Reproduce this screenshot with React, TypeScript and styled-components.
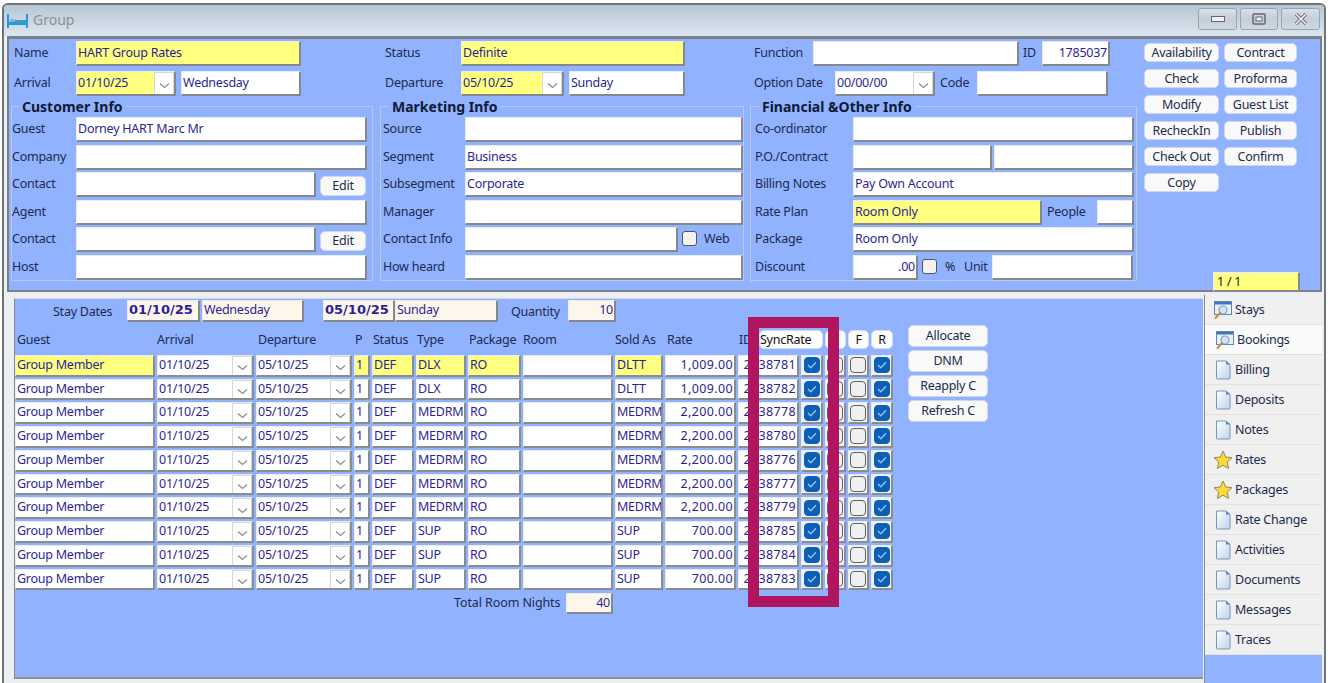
import React from "react";
import styled, { createGlobalStyle } from "styled-components";

const Global = createGlobalStyle`
  html, body { margin: 0; padding: 0; background: #fff; width: 1328px; height: 683px; overflow: hidden; }
  body { font-family: "Noto Sans", "Liberation Sans", sans-serif; font-size: 12.5px; letter-spacing: -0.25px; color: #1c2b4d; }
`;

const BLUE = "#91b2ff";
const INK = "#2a1f96";

const Win = styled.div`
  margin: 3px 2px 0 2px; height: 680px; box-sizing: border-box;
  border: 2px solid #6f7478; border-bottom: none; border-radius: 6px 6px 0 0;
  background: #eceff2; display: flex; flex-direction: column; overflow: hidden;
`;
const TitleBar = styled.div`
  height: 31px; flex: none; display: flex; align-items: center; padding: 0 4px 0 3px;
  background: linear-gradient(#b7c6d3, #dbe7f0);
`;
const TitleText = styled.span`
  margin-left: 5px; margin-top: -2px; font-size: 14px; letter-spacing: 0; color: #8c9094;
`;
const WinBtns = styled.div`
  margin-left: auto; display: flex; gap: 3px; margin-top: -3px;
`;
const WinBtn = styled.div<{ $w: number }>`
  width: ${p => p.$w}px; height: 22px; box-sizing: border-box;
  border: 1px solid #98a4af; border-radius: 3px;
  background: linear-gradient(#d8e0e8, #c3ced8 50%, #cfd9e2);
  display: flex; align-items: center; justify-content: center;
`;
const TopPanel = styled.div`
  margin: 0 2px 0 3px; height: 256px; flex: none; box-sizing: border-box;
  border: 2px solid #7c7f85; border-top-width: 3px; background: ${BLUE};
  display: grid; grid-template-columns: 370px 370px 394px 176px; padding-left: 0;
`;
const Col = styled.div`
  display: flex; flex-direction: column; padding-top: 2px;
`;
const TopRow = styled.div<{ $pl?: number }>`
  height: 30px; display: flex; align-items: flex-start; padding-left: ${p => p.$pl ?? 5}px;
`;
const Label = styled.span<{ $w?: number; $ml?: number }>`
  ${p => p.$w ? `width: ${p.$w}px;` : ""} flex: none; height: 24px; line-height: 23px; white-space: nowrap;
  margin-left: ${p => p.$ml ?? 0}px; color: #1c2b4d;
`;
const Field = styled.div<{ $w: number; $yellow?: boolean; $right?: boolean; $ml?: number; $h?: number; $bg?: string; $bold?: boolean }>`
  width: ${p => p.$w}px; height: ${p => p.$h ?? 25}px; box-sizing: border-box; flex: none;
  margin-left: ${p => p.$ml ?? 0}px;
  background: ${p => p.$bg ?? (p.$yellow ? "#ffff80" : "#fff")};
  border-top: 1px solid #e6ecfa; border-left: 1px solid #e6ecfa;
  border-right: 2px solid #85888c; border-bottom: 2px solid #85888c;
  color: ${INK}; padding: 0 1px; line-height: ${p => (p.$h ?? 25) - 4}px; white-space: nowrap; overflow: hidden;
  display: flex; justify-content: ${p => p.$right ? "flex-end" : "flex-start"};
  font-weight: ${p => p.$bold ? 700 : 400};
  ${p => p.$bold ? `font-family: "DejaVu Sans", sans-serif; font-size: 13px; letter-spacing: 0;` : ""}
`;
const DropBtn = styled.span`
  margin-left: auto; width: 20px; flex: none; height: 100%; box-sizing: border-box; background: #fff;
  border: 1px solid #d8d8d8; border-bottom: none; display: flex; align-items: center; justify-content: center; padding-top: 4px;
  position: relative; right: -1px;
`;
const Group = styled.fieldset<{ $pl: number; $ml: number; $w: number }>`
  margin: -2px 0 0 ${p => p.$ml}px; width: ${p => p.$w}px; border: 1px solid #b9c8e8; padding: 0 0 0 ${p => p.$pl}px;
  min-width: 0; height: 182px; box-sizing: border-box;
`;
const Legend = styled.legend<{ $ml: number }>`
  margin-left: ${p => p.$ml}px; padding: 0 3px; font-weight: 700; font-size: 14px; letter-spacing: 0; line-height: 15px; color: #101a33;
`;
const GroupBody = styled.div`
  padding-top: 3px; display: flex; flex-direction: column;
`;
const GroupRow = styled.div`
  height: 27.5px; display: flex; align-items: flex-start;
`;
const SmallBtn = styled.div<{ $w?: number; $ml?: number; $h?: number }>`
  width: ${p => p.$w ? `${p.$w}px` : "100%"}; height: ${p => p.$h ?? 19}px; box-sizing: border-box; flex: none; text-align: center;
  margin-left: ${p => p.$ml ?? 0}px;
  line-height: ${p => (p.$h ?? 19) - 2}px; background: #f9f9f9; border: 1px solid #cfd8ea; border-radius: 5px; color: #1c2b4d; white-space: nowrap;
`;
const EditBtn = styled(SmallBtn)`
  margin-top: 4px;
`;
const Box = styled.span<{ $ml?: number; $mr?: number }>`
  width: 15px; height: 15px; box-sizing: border-box; flex: none; margin: 4px ${p => p.$mr ?? 0}px 0 ${p => p.$ml ?? 0}px;
  background: #f3f3f3; border: 1px solid #555; border-radius: 3px;
`;
const ButtonsCol = styled.div`
  display: flex; flex-direction: column; justify-content: space-between; padding: 4px 0 0 1px;
`;
const BtnGrid = styled.div`
  display: grid; grid-template-columns: 75px 73px; column-gap: 5px; row-gap: 7px; margin-left: 0;
`;
const Pager = styled(Field)`
  margin-left: 69px; margin-bottom: -2px; color: #222; padding-left: 3px; line-height: 18px;
`;
const Bottom = styled.div`
  flex: 1; display: flex; padding: 6px 0 0 0; min-height: 0; align-items: stretch;
`;
const Main = styled.div`
  margin-left: 10px; width: 1189px; height: 381px; box-sizing: border-box; background: ${BLUE};
  border-top: 1px solid #d4d9e4; border-bottom: 2px solid #8d9095; border-left: 1px solid #888;
  position: relative; padding: 1px 0 0 0;
`;
const Stay = styled.div`
  height: 29px; display: flex; align-items: flex-start;
`;
const Content = styled.div`
  display: flex; align-items: flex-start;
`;
const Table = styled.div`
  display: grid; width: 880px; row-gap: 2px; column-gap: 2px;
  grid-template-columns: 140px 97px 96px 16px 42px 50px 53px 90px 48px 71px 61px 22px 21px 21px 22px;
  grid-template-rows: 23.75px; grid-auto-rows: 21.75px;
`;
const Head = styled.div<{ $pl?: number }>`
  line-height: 22px; white-space: nowrap; padding-left: ${p => p.$pl ?? 0}px; color: #1c2b4d; height: 22px;
`;
const HeadBtn = styled.div`
  height: 19px; margin-top: 1px; line-height: 17px; box-sizing: border-box; background: #fdfdfd; border: 1px solid #d3ddf3; border-radius: 5px; text-align: center; color: #111;
`;
const SyncHead = styled(HeadBtn)`
  width: 64px; margin-left: -42px; text-align: left; padding-left: 0;
`;
const Cell = styled.div<{ $yellow?: boolean; $right?: boolean }>`
  background: ${p => p.$yellow ? "#ffff80" : "#fff"}; color: ${INK}; box-sizing: border-box;
  border-right: 2px solid #8a8d90; border-bottom: 2px solid #8a8d90;
  border-top: 1px solid #e6ecfa; border-left: 1px solid #e6ecfa;
  padding: 0 1px; line-height: 18px; white-space: nowrap; overflow: hidden; display: flex;
  justify-content: ${p => p.$right ? "flex-end" : "flex-start"};
  ${p => p.$right ? "letter-spacing: 0.35px;" : ""}
`;
const CheckCell = styled.div`
  background: #f4f4f4; box-sizing: border-box; display: flex; align-items: center; justify-content: center;
  border-right: 2px solid #8a8d90; border-bottom: 2px solid #8a8d90; border-top: 1px solid #e6ecfa; border-left: 1px solid #e6ecfa;
`;
const Check = styled.span<{ $on?: boolean }>`
  width: 16px; height: 16px; box-sizing: border-box; border-radius: 4px; display: flex; align-items: center; justify-content: center;
  background: ${p => p.$on ? "#0b5fb6" : "#f0f0f0"};
  border: 1px solid ${p => p.$on ? "#0b5fb6" : "#5f5f5f"};
`;
const Totals = styled.div`
  display: flex; margin-top: 3px; padding-left: 439px;
`;
const TotalLabel = styled(Label)`
  line-height: 20px; letter-spacing: -0.1px;
`;
const Actions = styled.div`
  margin-left: 13px; margin-top: -4px; display: flex; flex-direction: column; gap: 3px;
`;
const Highlight = styled.div`
  position: absolute; left: 733px; top: 18px; width: 91px; height: 290px; box-sizing: border-box;
  border: 11px solid #b01560; pointer-events: none;
`;
const Tabs = styled.div`
  margin-left: 1px; width: 117px; display: flex; flex-direction: column; margin-top: -3px; background: ${BLUE}; border-left: 1px solid #888;
`;
const Tab = styled.div<{ $active?: boolean }>`
  height: 30px; flex: none; box-sizing: border-box; display: flex; align-items: center; gap: 2px;
  padding-left: ${p => p.$active ? 10 : 8}px; background: ${p => p.$active ? "#fafafa" : "#f0f0f0"};
  border-bottom: 1px solid #e2e2e2; color: #1c2b4d;
`;
const IconSlot = styled.span`
  width: 20px; height: 20px; flex: none; display: flex; align-items: center; justify-content: center;
`;

const Chevron = () => (
  <svg width="11" height="7" viewBox="0 0 11 7"><path d="M1 1.5 L5.5 5.5 L10 1.5" fill="none" stroke="#8a8a8a" strokeWidth="1.2" /></svg>
);
const Tick = () => (
  <svg width="10" height="8" viewBox="0 0 10 8"><path d="M1 4 L3.8 6.8 L9 1.2" fill="none" stroke="#9cc3ea" strokeWidth="1.3" /></svg>
);
const Bed = () => (
  <svg width="21" height="14" viewBox="0 0 21 14">
    <path d="M1 0 V14 M20 0 V14" stroke="#1f9be8" strokeWidth="2" />
    <rect x="2" y="8" width="17" height="3" fill="#1f9be8" />
    <rect x="3" y="5" width="5" height="3" fill="#7fb4d8" />
    <rect x="8" y="6" width="11" height="2" fill="#5f8fb2" />
  </svg>
);
const Find = () => (
  <svg width="20" height="20" viewBox="0 0 20 20">
    <rect x="1.5" y="1.5" width="17" height="13" fill="#e8f0fa" stroke="#5f88b5" />
    <rect x="2" y="2" width="16" height="2.5" fill="#3f78b8" />
    <circle cx="10" cy="10" r="4" fill="#cfe5f7" stroke="#8aa0b5" strokeWidth="1.2" />
    <path d="M7 13 L2.5 18" stroke="#c98a3a" strokeWidth="2" strokeLinecap="round" />
  </svg>
);
const Doc = () => (
  <svg width="16" height="20" viewBox="0 0 16 20">
    <defs><linearGradient id="d" x1="0" y1="0" x2="1" y2="1"><stop offset="0" stopColor="#fff" /><stop offset="1" stopColor="#bcd4f2" /></linearGradient></defs>
    <path d="M1.5 1 H11 L15 4.5 V18 Q15 19 14 19 H2.5 Q1.5 19 1.5 18 Z" fill="url(#d)" stroke="#7f93ad" />
    <path d="M11 1 L15 4.5 H11 Z" fill="#3f86d8" />
  </svg>
);
const Star = () => (
  <svg width="20" height="20" viewBox="0 0 20 20">
    <path d="M10 1 L12.7 7 L19 7.7 L14.3 12 L15.6 18.5 L10 15.2 L4.4 18.5 L5.7 12 L1 7.7 L7.3 7 Z" fill="#ffd83a" stroke="#8f8a5a" strokeWidth="1" />
  </svg>
);

const DateField = ({ w, value, yellow, ml }: { w: number; value: string; yellow?: boolean; ml?: number }) => (
  <Field $w={w} $yellow={yellow} $ml={ml}>{value}<DropBtn><Chevron /></DropBtn></Field>
);

const rows = [
  ["DLX", "DLTT", "1,009.00", "38781"], ["DLX", "DLTT", "1,009.00", "38782"],
  ["MEDRM", "MEDRM", "2,200.00", "38778"], ["MEDRM", "MEDRM", "2,200.00", "38780"],
  ["MEDRM", "MEDRM", "2,200.00", "38776"], ["MEDRM", "MEDRM", "2,200.00", "38777"],
  ["MEDRM", "MEDRM", "2,200.00", "38779"], ["SUP", "SUP", "700.00", "38785"],
  ["SUP", "SUP", "700.00", "38784"], ["SUP", "SUP", "700.00", "38783"],
];
const tabs: [string, React.ReactNode][] = [
  ["Stays", <Find />], ["Bookings", <Find />], ["Billing", <Doc />], ["Deposits", <Doc />], ["Notes", <Doc />],
  ["Rates", <Star />], ["Packages", <Star />], ["Rate Change", <Doc />], ["Activities", <Doc />],
  ["Documents", <Doc />], ["Messages", <Doc />], ["Traces", <Doc />],
];
const topButtons = ["Availability", "Contract", "Check", "Proforma", "Modify", "Guest List", "RecheckIn", "Publish", "Check Out", "Confirm", "Copy"];

export default function App() {
  return (
    <>
      <Global />
      <Win>
        <TitleBar>
          <Bed />
          <TitleText>Group</TitleText>
          <WinBtns>
            <WinBtn $w={39}><svg width="14" height="6"><rect x="0.5" y="0.5" width="13" height="5" fill="#eef1f4" stroke="#667" /></svg></WinBtn>
            <WinBtn $w={38}><svg width="14" height="12"><rect x="1" y="1" width="12" height="10" rx="1" fill="none" stroke="#667" strokeWidth="1.5" /><rect x="4" y="4" width="6" height="4" fill="#eef1f4" stroke="#667" /></svg></WinBtn>
            <WinBtn $w={39}><svg width="14" height="12"><path d="M2 1 L12 11 M12 1 L2 11" stroke="#667" strokeWidth="3.4" /><path d="M2 1 L12 11 M12 1 L2 11" stroke="#eef1f4" strokeWidth="1.6" /></svg></WinBtn>
          </WinBtns>
        </TitleBar>
        <TopPanel>
          <Col>
            <TopRow><Label $w={62}>Name</Label><Field $w={225} $yellow>HART Group Rates</Field></TopRow>
            <TopRow><Label $w={62}>Arrival</Label><DateField w={100} value="01/10/25" yellow /><Field $w={120} $ml={5}>Wednesday</Field></TopRow>
            <Group $pl={0} $ml={2} $w={362}>
              <Legend $ml={7}>Customer Info</Legend>
              <GroupBody>
                <GroupRow><Label $w={64}>Guest</Label><Field $w={291}>Dorney HART Marc Mr</Field></GroupRow>
                <GroupRow><Label $w={64}>Company</Label><Field $w={291} /></GroupRow>
                <GroupRow><Label $w={64}>Contact</Label><Field $w={240} /><EditBtn $w={46} $ml={4} $h={20}>Edit</EditBtn></GroupRow>
                <GroupRow><Label $w={64}>Agent</Label><Field $w={291} /></GroupRow>
                <GroupRow><Label $w={64}>Contact</Label><Field $w={240} /><EditBtn $w={46} $ml={4} $h={20}>Edit</EditBtn></GroupRow>
                <GroupRow><Label $w={64}>Host</Label><Field $w={291} /></GroupRow>
              </GroupBody>
            </Group>
          </Col>
          <Col>
            <TopRow $pl={6}><Label $w={76}>Status</Label><Field $w={224} $yellow>Definite</Field></TopRow>
            <TopRow $pl={6}><Label $w={76}>Departure</Label><DateField w={103} value="05/10/25" yellow /><Field $w={116} $ml={5}>Sunday</Field></TopRow>
            <Group $pl={2} $ml={1} $w={364}>
              <Legend $ml={6}>Marketing Info</Legend>
              <GroupBody>
                <GroupRow><Label $w={82}>Source</Label><Field $w={278} /></GroupRow>
                <GroupRow><Label $w={82}>Segment</Label><Field $w={278}>Business</Field></GroupRow>
                <GroupRow><Label $w={82}>Subsegment</Label><Field $w={278}>Corporate</Field></GroupRow>
                <GroupRow><Label $w={82}>Manager</Label><Field $w={278} /></GroupRow>
                <GroupRow><Label $w={82}>Contact Info</Label><Field $w={213} /><Box $ml={4} /><Label $ml={7}>Web</Label></GroupRow>
                <GroupRow><Label $w={82}>How heard</Label><Field $w={278} /></GroupRow>
              </GroupBody>
            </Group>
          </Col>
          <Col>
            <TopRow $pl={5}><Label $w={59}>Function</Label><Field $w={206} /><Label $w={19} $ml={4}>ID</Label><Field $w={68} $right>1785037</Field></TopRow>
            <TopRow $pl={5}><Label $w={81}>Option Date</Label><DateField w={100} value="00/00/00" /><Label $w={37} $ml={5}>Code</Label><Field $w={131} /></TopRow>
            <Group $pl={4} $ml={1} $w={387}>
              <Legend $ml={4}>Financial &amp;Other Info</Legend>
              <GroupBody>
                <GroupRow><Label $w={98}>Co-ordinator</Label><Field $w={281} /></GroupRow>
                <GroupRow><Label $w={98}>P.O./Contract</Label><Field $w={139} /><Field $w={140} $ml={2} /></GroupRow>
                <GroupRow><Label $w={98}>Billing Notes</Label><Field $w={281}>Pay Own Account</Field></GroupRow>
                <GroupRow><Label $w={98}>Rate Plan</Label><Field $w={189} $yellow>Room Only</Field><Label $w={50} $ml={5}>People</Label><Field $w={37} /></GroupRow>
                <GroupRow><Label $w={98}>Package</Label><Field $w={281}>Room Only</Field></GroupRow>
                <GroupRow><Label $w={98}>Discount</Label><Field $w={65} $right>.00</Field><Box $ml={4} /><Label $w={12} $ml={8}>%</Label><Label $ml={7} $w={28}>Unit</Label><Field $w={141} /></GroupRow>
              </GroupBody>
            </Group>
          </Col>
          <ButtonsCol>
            <BtnGrid>{topButtons.map(b => <SmallBtn key={b}>{b}</SmallBtn>)}</BtnGrid>
            <Pager $w={87} $h={20} $yellow>1 / 1</Pager>
          </ButtonsCol>
        </TopPanel>
        <Bottom>
          <Main>
            <Stay>
              <Label $w={74} $ml={38}>Stay Dates</Label>
              <Field $w={73} $h={22} $bold $bg="#fdf6ea">01/10/25</Field>
              <Field $w={102} $h={22} $ml={2} $bg="#fdf6ea">Wednesday</Field>
              <Field $w={72} $h={22} $ml={19} $bold $bg="#fdf6ea">05/10/25</Field>
              <Field $w={103} $h={22} $bg="#fdf6ea">Sunday</Field>
              <Label $w={57} $ml={13}>Quantity</Label>
              <Field $w={48} $h={22} $right $bg="#fdf6ea">10</Field>
            </Stay>
            <Content>
              <div>
                <Table>
                  <Head $pl={2}>Guest</Head><Head>Arrival</Head><Head $pl={2}>Departure</Head><Head $pl={1}>P</Head><Head $pl={1}>Status</Head>
                  <Head $pl={1}>Type</Head><Head $pl={1}>Package</Head><Head>Room</Head><Head>Sold As</Head><Head $pl={2}>Rate</Head><Head $pl={1}>ID</Head>
                  <SyncHead>SyncRate</SyncHead><HeadBtn /><HeadBtn>F</HeadBtn><HeadBtn>R</HeadBtn>
                  {rows.map(([type, sold, rate, id], i) => {
                    const y = i === 0;
                    return (
                      <React.Fragment key={id}>
                        <Cell $yellow={y}>Group Member</Cell>
                        <Cell>01/10/25<DropBtn><Chevron /></DropBtn></Cell>
                        <Cell>05/10/25<DropBtn><Chevron /></DropBtn></Cell>
                        <Cell $yellow={y}>1</Cell>
                        <Cell $yellow={y}>DEF</Cell>
                        <Cell $yellow={y}>{type}</Cell>
                        <Cell $yellow={y}>RO</Cell>
                        <Cell />
                        <Cell $yellow={y}>{sold}</Cell>
                        <Cell $right>{rate}</Cell>
                        <Cell $right>{"21" + id}</Cell>
                        <CheckCell><Check $on><Tick /></Check></CheckCell>
                        <CheckCell><Check /></CheckCell>
                        <CheckCell><Check /></CheckCell>
                        <CheckCell><Check $on><Tick /></Check></CheckCell>
                      </React.Fragment>
                    );
                  })}
                </Table>
                <Totals>
                  <TotalLabel $w={112}>Total Room Nights</TotalLabel>
                  <Field $w={47} $h={21} $right $bg="#fdf6ea">40</Field>
                </Totals>
              </div>
              <Actions>
                {["Allocate", "DNM", "Reapply C", "Refresh C"].map(a => <SmallBtn key={a} $w={80} $h={22}>{a}</SmallBtn>)}
              </Actions>
            </Content>
            <Highlight />
          </Main>
          <Tabs>
            {tabs.map(([t, icon], i) => <Tab key={t} $active={i === 1}><IconSlot>{icon}</IconSlot>{t}</Tab>)}
          </Tabs>
        </Bottom>
      </Win>
    </>
  );
}
